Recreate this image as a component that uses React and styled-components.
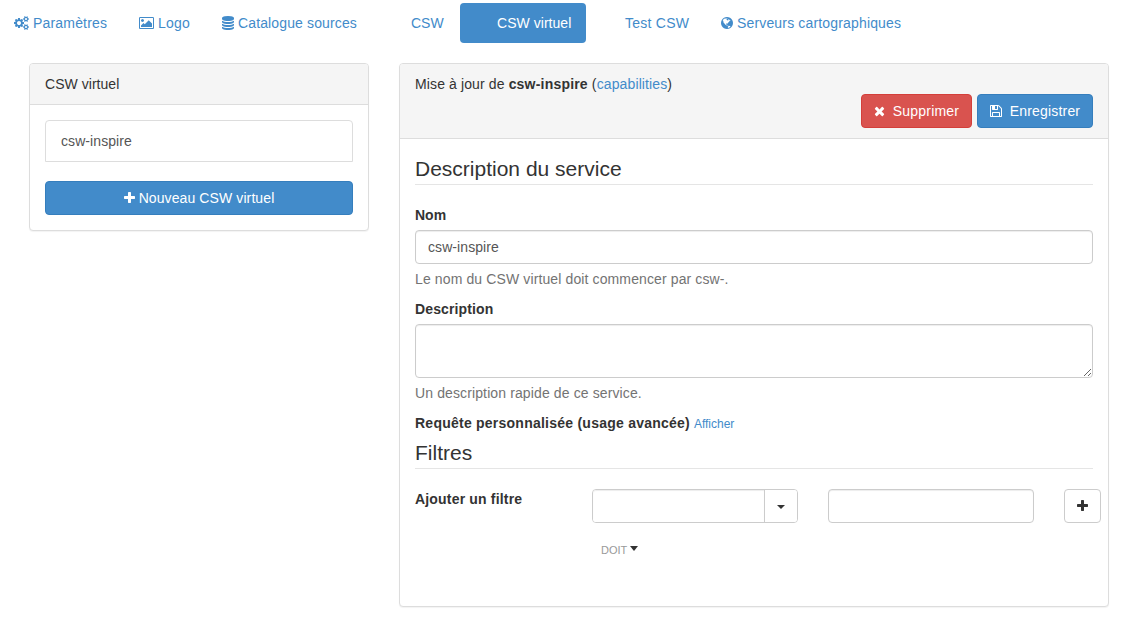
import React from 'react';
import styled, { createGlobalStyle, css } from 'styled-components';

const GlobalStyle = createGlobalStyle`
  *, *::before, *::after { box-sizing: border-box; }
  body {
    margin: 0;
    background: #fff;
    color: #333;
    font-family: "Liberation Sans", Arial, sans-serif;
    font-size: 14px;
    line-height: 20px;
  }
  input, textarea, button { font: inherit; }
`;

const COG_SMALL = 'v140q0 16-149 31-12 27-30 52 51 113 51 138 0 4-4 7-122 71-124 71-8 0-46-47t-52-68q-20 2-30 2t-30-2q-14 21-52 68t-46 47q-2 0-124-71-4-3-4-7 0-25 51-138-18-25-30-52-149-15-149-31v-140q0-16 149-31 13-29 30-52-51-113-51-138 0-4 4-7 4-2 35-20t59-34 30-16q8 0 46 46.5t52 67.5q20-2 30-2t30 2q51-71 92-112l6-2q4 0 124 70 4 3 4 7 0 25-51 138 17 23 30 52 149 15 149 31z';

/* x: left edge of the glyph box, w: advance width, both in 1/128 px units at 14px */
const ICONS = {
  cogs: {
    x: -64, w: 1920,
    d: `M832 896q0-106-75-181t-181-75-181 75-75 181 75 181 181 75 181-75 75-181zm768 512q0-52-38-90t-90-38-90 38-38 90q0 53 37.5 90.5t90.5 37.5 90.5-37.5 37.5-90.5zm0-1024q0-52-38-90t-90-38-90 38-38 90q0 53 37.5 90.5t90.5 37.5 90.5-37.5 37.5-90.5zm-384 421v185q0 10-7 19.5t-16 10.5l-155 24q-11 35-32 76 34 48 90 115 7 11 7 20 0 12-7 19-23 30-82.5 89.5t-78.5 59.5q-11 0-21-7l-115-90q-37 19-77 31-11 108-23 155-7 24-30 24h-186q-11 0-20-7.5t-10-17.5l-23-153q-34-10-75-31l-118 89q-7 7-20 7-11 0-21-8-144-133-144-160 0-9 7-19 10-14 41-53t47-61q-23-44-35-82l-152-24q-10-1-17-9.5t-7-19.5v-185q0-10 7-19.5t16-10.5l155-24q11-35 32-76-34-48-90-115-7-11-7-20 0-12 7-20 22-30 82-89t79-59q11 0 21 7l115 90q34-18 77-32 11-108 23-154 7-24 30-24h186q11 0 20 7.5t10 17.5l23 153q34 10 75 31l118-89q8-7 20-7 11 0 21 8 144 133 144 160 0 8-7 19-12 16-42 54t-45 60q23 48 34 82l152 23q10 2 17 10.5t7 19.5zm640 533${COG_SMALL}m0-1024${COG_SMALL}`,
  },
  picture: {
    x: -64, w: 1920,
    d: 'M576 576q0 80-56 136t-136 56-136-56-56-136 56-136 136-56 136 56 56 136zm1024 384v448h-1408v-192l320-320 160 160 512-512zm96-704h-1600q-13 0-22.5 9.5t-9.5 22.5v1216q0 13 9.5 22.5t22.5 9.5h1600q13 0 22.5-9.5t9.5-22.5v-1216q0-13-9.5-22.5t-22.5-9.5zm160 32v1216q0 66-47 113t-113 47h-1600q-66 0-113-47t-47-113v-1216q0-66 47-113t113-47h1600q66 0 113 47t47 113z',
  },
  database: {
    x: 0, w: 1536,
    d: 'M768 768q237 0 443-43t325-127v170q0 69-103 128t-280 93.5-385 34.5-385-34.5-280-93.5-103-128v-170q119 84 325 127t443 43zm0 768q237 0 443-43t325-127v170q0 69-103 128t-280 93.5-385 34.5-385-34.5-280-93.5-103-128v-170q119 84 325 127t443 43zm0-384q237 0 443-43t325-127v170q0 69-103 128t-280 93.5-385 34.5-385-34.5-280-93.5-103-128v-170q119 84 325 127t443 43zm0-1152q208 0 385 34.5t280 93.5 103 128v128q0 69-103 128t-280 93.5-385 34.5-385-34.5-280-93.5-103-128v-128q0-69 103-128t280-93.5 385-34.5z',
  },
  globe: {
    x: 128, w: 1536,
    d: 'M896 128q209 0 385.5 103t279.5 279.5 103 385.5-103 385.5-279.5 279.5-385.5 103-385.5-103-279.5-279.5-103-385.5 103-385.5 279.5-279.5 385.5-103zm274 521q-2 1-9.5 9.5t-13.5 9.5q2 0 4.5-5t5-11 3.5-7q6-7 22-15 14-6 52-12 34-8 51 11-2-2 9.5-13t14.5-12q3-2 15-4.5t15-7.5l2-22q-12 1-17.5-7t-6.5-21q0 2-6 8 0-7-4.5-8t-11.5 1-9 1q-10-3-15-7.5t-8-16.5-4-15q-2-5-9.5-11t-9.5-10q-1-2-2.5-5.5t-3-6.5-4-5.5-5.5-2.5-7 5-7.5 10-4.5 5q-3-2-6-1.5t-4.5 1-4.5 3-5 3.5q-3 2-8.5 3t-8.5 2q15-5-1-11-10-4-16-3 9-4 7.5-12t-8.5-14h5q-1-4-8.5-8.5t-17.5-8.5-13-6q-8-5-34-9.5t-33-.5q-5 6-4.5 10.5t4 14 3.5 12.5q1 6-5.5 13t-6.5 12q0 7 14 15.5t10 21.5q-3 8-16 16t-16 12q-5 8-1.5 18.5t10.5 16.5q2 2 1.5 4t-3.5 4.5-5.5 4-6.5 3.5l-3 2q-11 5-20.5-6t-13.5-26q-7-25-16-30-23-8-29 1-5-13-41-26-25-9-58-4 6-1 0-15-7-15-19-12 3-6 4-17.5t1-13.5q3-13 12-23 1-1 7-8.5t9.5-13.5.5-6q35 4 50-11 5-5 11.5-17t10.5-17q9-6 14-5.5t14.5 5.5 14.5 5q14 1 15.5-11t-7.5-20q12 1 3-17-4-7-8-9-12-4-27 5-8 4 2 8-1-1-9.5 10.5t-16.5 17.5-16-5q-1-1-5.5-13.5t-9.5-13.5q-8 0-16 15 3-8-11-15t-24-8q19-12-8-27-7-4-20.5-5t-19.5 4q-5 7-5.5 11.5t5 8 10.5 5.5 11.5 4 8.5 3q14 10 8 14-2 1-8.5 3.5t-11.5 4.5-6 4q-3 4 0 14t-2 14q-5-5-9-17.5t-7-16.5q7 9-25 6l-10-1q-4 0-16 2t-20.5 1-13.5-8q-4-8 0-20 1-4 4-2-4-3-11-9.5t-10-8.5q-46 15-94 41 6 1 12-1 5-2 13-6.5t10-5.5q34-14 42-7l5-5q14 16 20 25-7-4-30-1-20 6-22 12 7 12 5 18-4-3-11.5-10t-14.5-11-15-5q-16 0-22 1-146 80-235 222 7 7 12 8 4 1 5 9t2.5 11 11.5-3q9 8 3 19 1-1 44 27 19 17 21 21 3 11-10 18-1-2-9-9t-9-4q-3 5 .5 18.5t10.5 12.5q-7 0-9.5 16t-2.5 35.5-1 23.5l2 1q-3 12 5.5 34.5t21.5 19.5q-13 3 20 43 6 8 8 9 3 2 12 7.5t15 10 10 10.5q4 5 10 22.5t14 23.5q-2 6 9.5 20t10.5 23q-1 0-2.5 1t-2.5 1q3 7 15.5 14t15.5 13q1 3 2 10t3 11 8 2q2-20-24-62-15-25-17-29-3-5-5.5-15.5t-4.5-14.5q2 0 6 1.5t8.5 3.5 7.5 4 2 3q-3 7 2 17.5t12 18.5 17 19 12 13q6 6 14 19.5t0 13.5q9 0 20 10.5t17 19.5q5 8 8 26t5 24q2 7 8.5 13.5t12.5 9.5l16 8 13 7q5 2 18.5 10.5t21.5 11.5q10 4 16 4t14.5-2.5 13.5-3.5q15-2 29 15t21 21q36 19 55 11-2 1 .5 7.5t8 15.5 9 14.5 5.5 8.5q5 6 18 15t18 15q6-4 7-9-3 8 7 20t18 10q14-3 14-32-31 15-49-18 0-1-2.5-5.5t-4-8.5-2.5-8.5 0-7.5 5-3q9 0 10-3.5t-2-12.5-4-13q-1-8-11-20t-12-15q-5 9-16 8t-16-9q0 1-1.5 5.5t-1.5 6.5q-13 0-15-1 1-3 2.5-17.5t3.5-22.5q1-4 5.5-12t7.5-14.5 4-12.5-4.5-9.5-17.5-2.5q-19 1-26 20-1 3-3 10.5t-5 11.5-9 7q-7 3-24 2t-24-5q-13-8-22.5-29t-9.5-37q0-10 2.5-26.5t3-25-5.5-24.5q3-2 9-9.5t10-10.5q2-1 4.5-1.5t4.5 0 4-1.5 3-6q-1-1-4-3-3-3-4-3 7 3 28.5-1.5t27.5 1.5q15 11 22-2 0-1-2.5-9.5t-.5-13.5q5 27 29 9 3 3 15.5 5t17.5 5q3 2 7 5.5t5.5 4.5 5-.5 8.5-6.5q10 14 12 24 11 40 19 44 7 3 11 2t4.5-9.5 0-14-1.5-12.5l-1-8v-18l-1-8q-15-3-18.5-12t1.5-18.5 15-18.5q1-1 8-3.5t15.5-6.5 12.5-8q21-19 15-35 7 0 11-9-1 0-5-3t-7.5-5-4.5-2q9-5 2-16 5-3 7.5-11t7.5-10q9 12 21 2 7-8 1-16 5-7 20.5-10.5t18.5-9.5q7 2 8-2t1-12 3-12q4-5 15-9t13-5l17-11q3-4 0-4 18 2 31-11 10-11-6-20 3-6-3-9.5t-15-5.5q3-1 11.5-.5t10.5-1.5q15-10-7-16-17-5-43 12zm-163 877q206-36 351-189-3-3-12.5-4.5t-12.5-3.5q-18-7-24-8 1-7-2.5-13t-8-9-12.5-8-11-7q-2-2-7-6t-7-5.5-7.5-4.5-8.5-2-10 1l-3 1q-3 1-5.5 2.5t-5.5 3-4 3 0 2.5q-21-17-36-22-5-1-11-5.5t-10.5-7-10-1.5-11.5 7q-5 5-6 15t-2 13q-7-5 0-17.5t2-18.5q-3-6-10.5-4.5t-12 4.5-11.5 8.5-9 6.5-8.5 5.5-8.5 7.5q-3 4-6 12t-5 11q-2-4-11.5-6.5t-9.5-5.5q2 10 4 35t5 38q7 31-12 48-27 25-29 40-4 22 12 26 0 7-8 20.5t-7 21.5q0 6 2 16z',
  },
  plus: {
    x: 192, w: 1408,
    d: 'M1600 736v192q0 40-28 68t-68 28h-416v416q0 40-28 68t-68 28h-192q-40 0-68-28t-28-68v-416h-416q-40 0-68-28t-28-68v-192q0-40 28-68t68-28h416v-416q0-40 28-68t68-28h192q40 0 68 28t28 68v416h416q40 0 68 28t28 68z',
  },
  times: {
    x: 192, w: 1408,
    d: 'M1490 1322q0 40-28 68l-136 136q-28 28-68 28t-68-28l-294-294-294 294q-28 28-68 28t-68-28l-136-136q-28-28-28-68t28-68l294-294-294-294q-28-28-28-68t28-68l136-136q28-28 68-28t68 28l294 294 294-294q28-28 68-28t68 28l136 136q28 28 28 68t-28 68l-294 294 294 294q28 28 28 68z',
  },
  floppy: {
    x: 128, w: 1536,
    d: 'M512 1536h768v-384h-768v384zm896 0h128v-896q0-14-10-38.5t-20-34.5l-281-281q-10-10-34-20t-39-10v416q0 40-28 68t-68 28h-576q-40 0-68-28t-28-68v-416h-128v1280h128v-416q0-40 28-68t68-28h832q40 0 68 28t28 68v416zm-384-928v-320q0-13-9.5-22.5t-22.5-9.5h-192q-13 0-22.5 9.5t-9.5 22.5v320q0 13 9.5 22.5t22.5 9.5h192q13 0 22.5-9.5t9.5-22.5zm640 32v928q0 40-28 68t-68 28h-1344q-40 0-68-28t-28-68v-1344q0-40 28-68t68-28h928q40 0 88 20t76 48l280 280q28 28 48 76t20 88z',
  },
};

const Glyph = styled.svg`
  flex: none;
  height: 14px;
  fill: currentColor;
`;

function Icon({ name }) {
  const { x, w, d } = ICONS[name];
  return (
    <Glyph viewBox={`${x} 0 ${w} 1792`} width={w / 128} aria-hidden="true">
      <path d={d} />
    </Glyph>
  );
}

const Page = styled.div`
  width: 1136px;
  height: 626px;
  padding-top: 3px;
  overflow: hidden;
`;

const Tabs = styled.nav`
  display: flex;
  gap: 2px;
  margin-left: -1px;
`;

const Tab = styled.a`
  display: flex;
  align-items: center;
  gap: 4px;
  height: 40px;
  width: ${(p) => p.$width}px;
  padding: 0 0 0 ${(p) => (p.$blank ? 37 : 15)}px;
  border-radius: 4px;
  color: #428bca;
  white-space: nowrap;
  ${(p) => p.$active && css`
    background: #428bca;
    color: #fff;
  `}
`;

const Label = styled.span`
  letter-spacing: ${(p) => p.$track || 0}px;
  white-space: nowrap;
`;

const Strong = styled.b`
  letter-spacing: ${(p) => p.$track || 0}px;
`;

const Columns = styled.main`
  display: grid;
  grid-template-columns: 340px 710px;
  gap: 30px;
  align-items: start;
  margin: 20px 0 0 29px;
`;

const Panel = styled.section`
  height: ${(p) => p.$height}px;
  border: 1px solid #ddd;
  border-radius: 4px;
  background: #fff;
  box-shadow: 0 1px 1px rgba(0, 0, 0, 0.05);
`;

const PanelHeading = styled.header`
  padding: 10px 15px;
  border-bottom: 1px solid #ddd;
  border-radius: 3px 3px 0 0;
  background: #f5f5f5;
`;

const PanelBody = styled.div`
  padding: 15px;
`;

const ListItem = styled.div`
  height: 42px;
  margin-bottom: 19px;
  padding: 10px 15px;
  border: 1px solid #ddd;
  border-radius: 4px 4px 0 0;
  color: #555;
`;

const tones = {
  primary: css`background: #428bca; border-color: #357ebd; color: #fff;`,
  danger: css`background: #d9534f; border-color: #d43f3a; color: #fff;`,
  plain: css`background: #fff; border-color: #ccc; color: #333;`,
};

const Button = styled.button`
  display: flex;
  align-items: center;
  justify-content: center;
  gap: ${(p) => p.$gap || 4}px;
  width: ${(p) => (p.$width ? `${p.$width}px` : '100%')};
  height: 34px;
  padding: 0;
  border: 1px solid;
  border-radius: 4px;
  ${(p) => tones[p.$tone]}
`;

const Actions = styled.div`
  display: flex;
  justify-content: flex-end;
  gap: 5px;
`;

const Link = styled.a`
  color: #428bca;
  font-size: ${(p) => (p.$small ? 12 : 14)}px;
`;

const Legend = styled.h2`
  margin: 0 0 20px;
  border-bottom: 1px solid #e5e5e5;
  font-size: 21px;
  font-weight: 400;
  line-height: 30px;
`;

const Field = styled.div`
  margin-bottom: 10px;
`;

const FieldLabel = styled.label`
  display: block;
  margin-bottom: 5px;
  font-weight: 700;
`;

const control = css`
  display: block;
  width: 100%;
  margin: 0;
  border: 1px solid #ccc;
  border-radius: 4px;
  background: #fff;
  box-shadow: inset 0 1px 1px rgba(0, 0, 0, 0.075);
  color: #555;
  outline: none;
`;

const Input = styled.input`
  ${control}
  height: 34px;
  padding: 6px 12px;
  letter-spacing: ${(p) => p.$track || 0}px;
`;

const TextArea = styled.textarea`
  ${control}
  height: 54px;
  padding: 6px 12px;
  resize: vertical;
`;

const Help = styled.p`
  margin: 5px 0 0;
  color: #737373;
`;

const Advanced = styled.div`
  height: 20px;
  margin-bottom: 5px;
`;

const FilterRow = styled.div`
  display: grid;
  grid-template-columns: 147px 206px 206px 37px;
  column-gap: 30px;
`;

const Combo = styled.div`
  display: flex;
  height: 34px;
  border: 1px solid #ccc;
  border-radius: 4px;
`;

const ComboText = styled.input`
  flex: 1;
  min-width: 0;
  padding: 6px 12px;
  border: 0;
  border-radius: 3px 0 0 3px;
  background: #fff;
  box-shadow: inset 0 1px 1px rgba(0, 0, 0, 0.075);
  outline: none;
`;

const ComboToggle = styled.button`
  display: flex;
  align-items: center;
  justify-content: center;
  width: 33px;
  padding: 2px 0 0;
  border: 0;
  border-left: 1px solid #ccc;
  border-radius: 0 3px 3px 0;
  background: #fff;
`;

const Caret = styled.i`
  border: solid transparent;
  border-width: ${(p) => p.$height}px 4px 0;
  border-top-color: #333;
`;

const Operator = styled.div`
  display: flex;
  align-items: center;
  gap: 3px;
  margin: 17px 0 0 9px;
  color: #999;
  font-size: 11px;

  ${Caret} { margin-bottom: 3px; }
`;

const TABS = [
  { text: 'Paramètres', icon: 'cogs', width: 123, track: 0.18 },
  { text: 'Logo', icon: 'picture', width: 81, track: 0.2 },
  { text: 'Catalogue sources', icon: 'database', width: 165, track: 0.13 },
  { text: 'CSW', width: 84 },
  { text: 'CSW virtuel', width: 126, active: true, track: 0.04 },
  { text: 'Test CSW', width: 116, track: 0.25 },
  { text: 'Serveurs cartographiques', icon: 'globe', width: 210, track: 0.16 },
];

export default function App() {
  return (
    <Page>
      <GlobalStyle />
      <Tabs>
        {TABS.map((t) => (
          <Tab key={t.text} $width={t.width} $blank={!t.icon} $active={t.active}>
            {t.icon && <Icon name={t.icon} />}
            <Label $track={t.track}>{t.text}</Label>
          </Tab>
        ))}
      </Tabs>
      <Columns>
        <Panel $height={168}>
          <PanelHeading><Label $track={0.04}>CSW virtuel</Label></PanelHeading>
          <PanelBody>
            <ListItem><Label $track={0.08}>csw-inspire</Label></ListItem>
            <Button $tone="primary"><Icon name="plus" /><Label $track={0.1}>Nouveau CSW virtuel</Label></Button>
          </PanelBody>
        </Panel>
        <Panel $height={544}>
          <PanelHeading>
            <Label $track={0.12}>Mise à jour de <Strong $track={0.2}>csw-inspire</Strong> (<Link>capabilities</Link>)</Label>
            <Actions>
              <Button $tone="danger" $width={111} $gap={8}><Icon name="times" /><Label $track={0.2}>Supprimer</Label></Button>
              <Button $tone="primary" $width={116} $gap={8}><Icon name="floppy" /><Label $track={0.18}>Enregistrer</Label></Button>
            </Actions>
          </PanelHeading>
          <PanelBody>
            <Legend><Label>Description du service</Label></Legend>
            <Field>
              <FieldLabel><Label>Nom</Label></FieldLabel>
              <Input defaultValue="csw-inspire" $track={0.08} />
              <Help><Label $track={0.12}>Le nom du CSW virtuel doit commencer par csw-.</Label></Help>
            </Field>
            <Field>
              <FieldLabel><Label $track={0.13}>Description</Label></FieldLabel>
              <TextArea />
              <Help><Label $track={0.12}>Un description rapide de ce service.</Label></Help>
            </Field>
            <Advanced>
              <Strong $track={0.24}>Requête personnalisée (usage avancée)</Strong>{' '}
              <Link $small>Afficher</Link>
            </Advanced>
            <Legend><Label>Filtres</Label></Legend>
            <FilterRow>
              <FieldLabel><Label $track={0.18}>Ajouter un filtre</Label></FieldLabel>
              <div>
                <Combo>
                  <ComboText />
                  <ComboToggle><Caret $height={4} /></ComboToggle>
                </Combo>
                <Operator><Label>DOIT</Label><Caret $height={5} /></Operator>
              </div>
              <Input />
              <Button $tone="plain" $width={37}><Icon name="plus" /></Button>
            </FilterRow>
          </PanelBody>
        </Panel>
      </Columns>
    </Page>
  );
}
